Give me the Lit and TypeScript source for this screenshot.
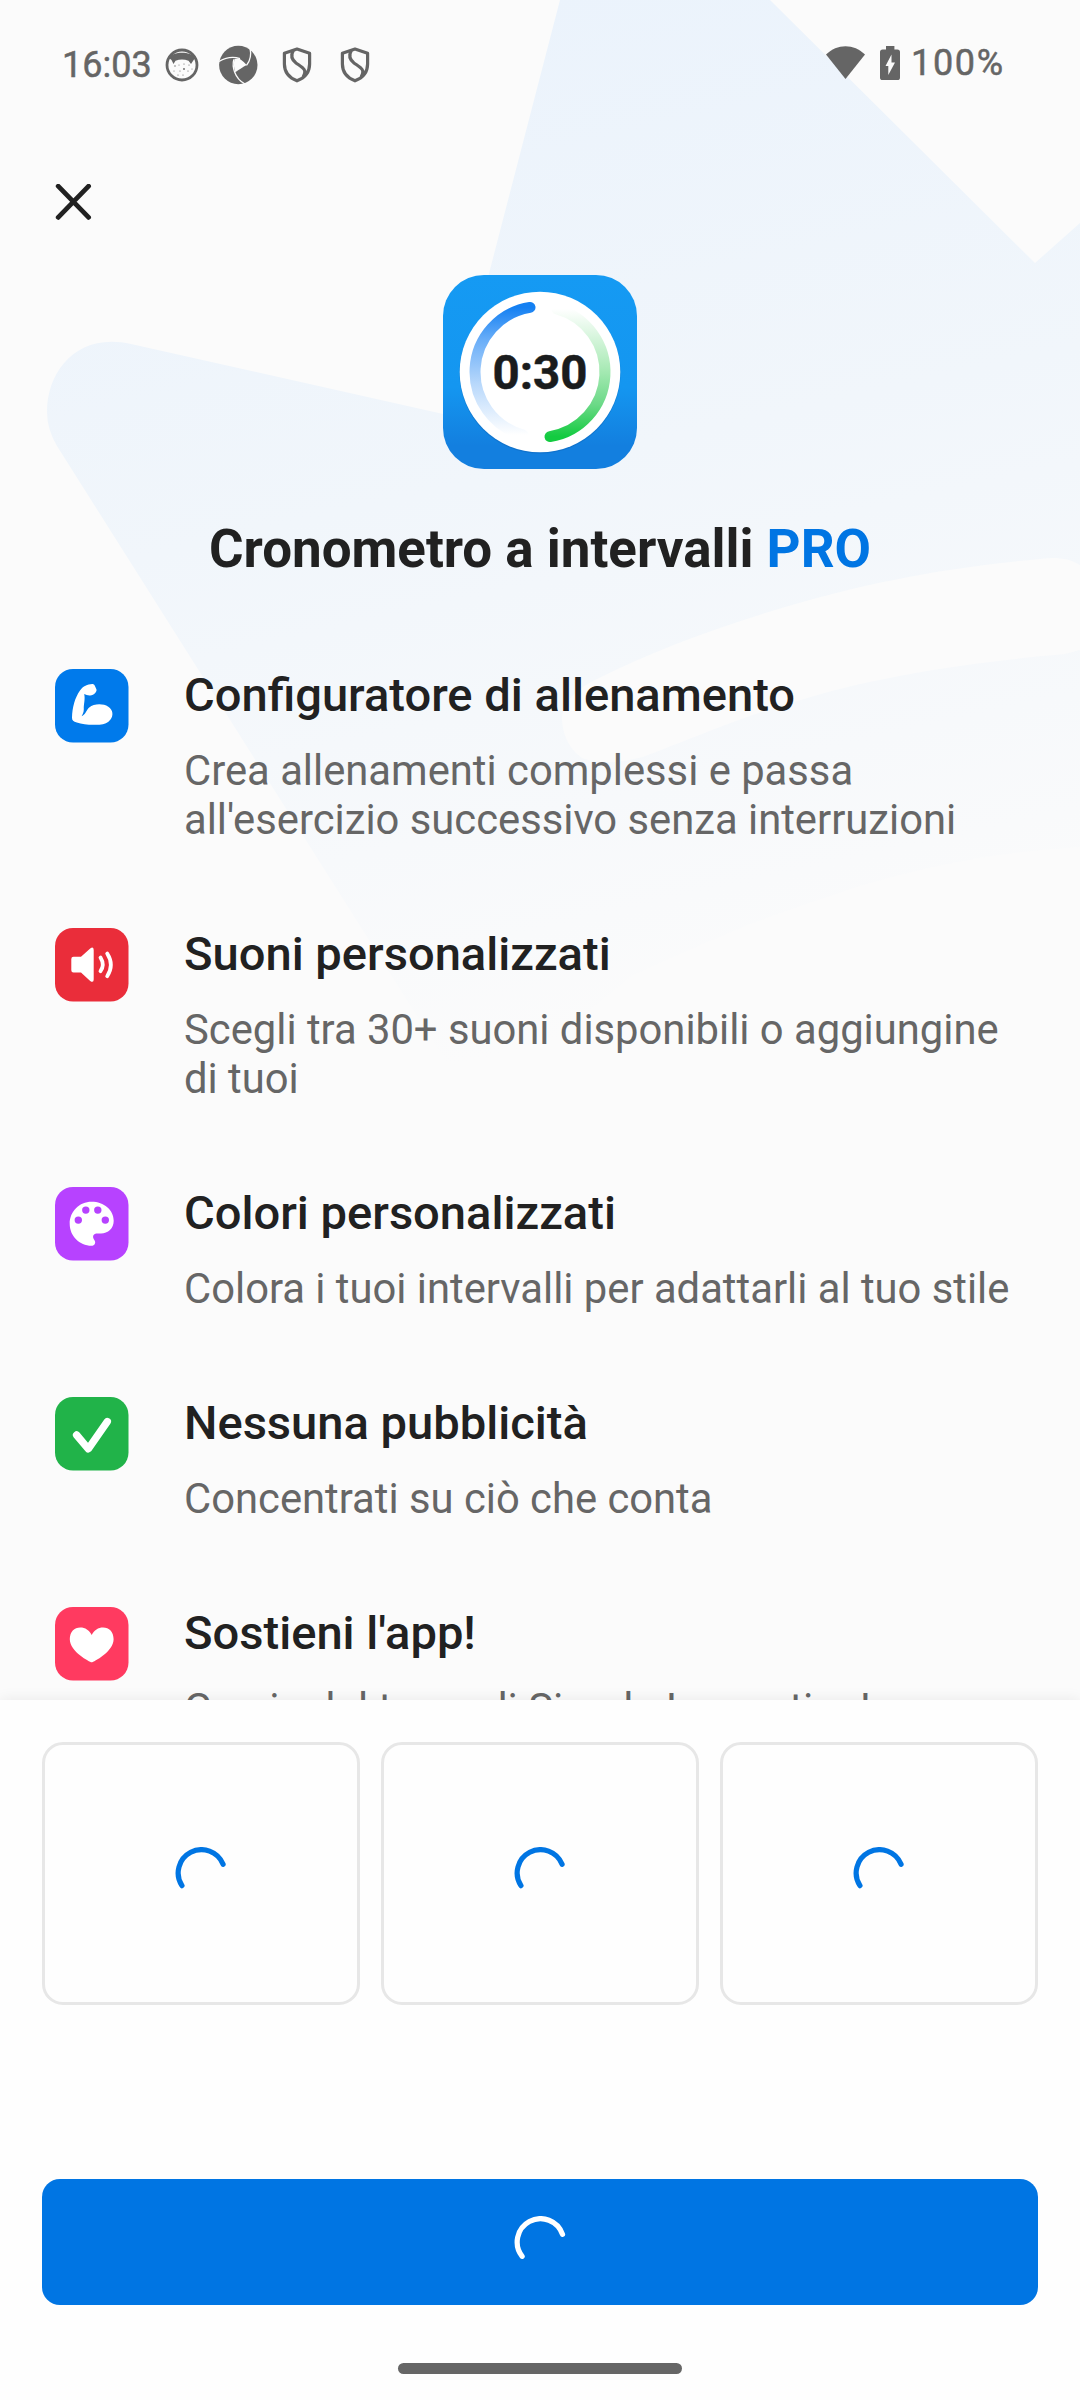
import { LitElement, html, css, svg } from "lit";
import { customElement, property } from "lit/decorators.js";

type Feature = { icon: string; title: string; text: string; color: string };

const FEATURES: Feature[] = [
  { icon: "arm", color: "#007aeb", title: "Configuratore di allenamento", text: "Crea allenamenti complessi e passa all'esercizio successivo senza interruzioni" },
  { icon: "sound", color: "#ea2d3a", title: "Suoni personalizzati", text: "Scegli tra 30+ suoni disponibili o aggiungine di tuoi" },
  { icon: "palette", color: "#b742ff", title: "Colori personalizzati", text: "Colora i tuoi intervalli per adattarli al tuo stile" },
  { icon: "check", color: "#21b349", title: "Nessuna pubblicità", text: "Concentrati su ciò che conta" },
  { icon: "heart", color: "#ff3a60", title: "Sostieni l'app!", text: "Grazie dal team di Simple Innovation!" },
];

// Glyphs are drawn on a 73x73 tile.
const GLYPHS: Record<string, unknown> = {
  arm: svg`<path fill="#fff" d="M37.2 15 C38.5 14.8 39.3 15.6 39.8 16.8 L41.3 20 C42 21.5 41.2 22.8 40.2 24 C38.8 25.6 36.8 26.6 34.5 26.4 C32.5 26.2 30.8 25.9 29.2 25 C30.4 30 28.6 35.5 28.8 40 C28.9 43 27.7 45.4 26.6 47.2 C30.8 45.8 31.2 41.2 34.2 38.6 C39 34.4 48 34.3 53.3 37.7 C58 40.7 58.7 46.3 55.5 50.5 C53 54 49.5 55.5 44.5 55.7 C37 56 28 56 21.8 53.6 C18.5 52.4 16.9 51.5 17 48.4 C17.3 38.3 19.8 28.9 25 21.5 C28.2 17 32.5 15.2 37.2 15Z"/>`,
  sound: svg`<path fill="#fff" d="M18.5 28.8 H26 L35.2 20.4 Q38.7 18 38.7 22 V51.4 Q38.7 55.3 35.2 53 L26 44.4 H18.5 Q16.3 44.4 16.3 42.2 V31 Q16.3 28.8 18.5 28.8Z"/><g fill="none" stroke="#fff" stroke-width="3.8" stroke-linecap="round"><path d="M45.5 29.6 Q50 37 45.5 43.2"/><path d="M52.2 25.6 Q59.5 37 52.2 48.2"/></g>`,
  palette: svg`<path fill="#fff" fill-rule="evenodd" d="M36.5 14.7 C49 14.7 58.7 22.8 58.7 33.7 C58.7 41.5 53 46.4 46 46.4 H42.4 C38.5 46.4 37 49 39 52.4 C41.6 55.6 39.6 58.7 36.5 58.7 C24.4 58.7 14.7 49 14.7 36.7 C14.7 24.4 24.4 14.7 36.5 14.7Z"/><g fill="#b742ff"><circle cx="23.3" cy="33.1" r="3.7"/><circle cx="30.8" cy="23.1" r="3.7"/><circle cx="42.8" cy="23.1" r="3.7"/><circle cx="50.3" cy="33.1" r="3.7"/></g>`,
  check: svg`<path d="M21.6 38 L33.3 51.8 L52.3 24.6" fill="none" stroke="#fff" stroke-width="7.4" stroke-linecap="round" stroke-linejoin="round"/>`,
  heart: svg`<path fill="#fff" d="M36.7 55.3 C34.8 55.3 14.8 44.5 14.8 32.3 C14.8 24.8 19.3 20.5 25.3 20.5 C30.2 20.5 34.2 23 36.7 28 C39.2 23 43.2 20.5 48.1 20.5 C54.1 20.5 58.6 24.8 58.6 32.3 C58.6 44.5 38.6 55.3 36.7 55.3Z"/>`,
};

@customElement("loading-arc")
class LoadingArc extends LitElement {
  // Arc ends in degrees, clockwise from three o'clock.
  @property({ type: Number }) from = 147;
  @property({ type: Number }) to = -22;
  static styles = css`
    :host { display: block; width: 53px; height: 53px; }
    svg { display: block; }
    path { fill: none; stroke: currentColor; stroke-width: 5.2; stroke-linecap: round; }
  `;
  private point(deg: number) {
    const a = (deg * Math.PI) / 180;
    return `${(23.3 * Math.cos(a)).toFixed(2)} ${(23.3 * Math.sin(a)).toFixed(2)}`;
  }
  render() {
    return html`<svg width="53" height="53" viewBox="-26.5 -26 53 53"><path d="M${this.point(this.from)} A23.3 23.3 0 1 1 ${this.point(this.to)}"/></svg>`;
  }
}

@customElement("status-bar")
class StatusBar extends LitElement {
  static styles = css`
    :host { display: flex; justify-content: space-between; height: 128px; box-sizing: border-box; padding: 0 76px 0 62px; color: #656565; font: 400 36px/126px Roboto, sans-serif; }
    .group { display: flex; align-items: center; }
    .left { padding-top: 2px; }
    .right { padding-bottom: 2px; }
    svg { display: block; }
    .time { width: 103px; letter-spacing: 0px; }
    .face { margin-right: 20px; }
    .shutter { margin-right: 24px; }
    .shield { margin-right: 28px; }
    .wifi { margin-right: 15px; }
    .battery { margin-right: 11px; }
    .level { width: 93px; letter-spacing: 1.7px; white-space: nowrap; }
    .text { -webkit-text-stroke: 0.5px #656565; }
  `;
  private shield() {
    return html`<svg class="shield" width="30" height="36" viewBox="0 0 30 36" fill="none" stroke="#656565" stroke-width="3.2" stroke-linejoin="round"><path d="M15 2 L27.6 6.2 V17 C27.6 25.4 22.3 31 15 33.8 C7.7 31 2.4 25.4 2.4 17 V6.2 Z"/><path d="M11.3 3.5 C8.5 8.5 9.5 12.5 14 16 C20.5 20.5 25.5 22.5 21.3 29.5"/></svg>`;
  }
  render() {
    return html`
      <div class="group left">
        <span class="time text">16:03</span>
        <svg class="face" width="34" height="34" viewBox="0 0 34 34"><circle cx="17" cy="17" r="15" fill="none" stroke="#656565" stroke-width="2.8"/><path fill="#656565" d="M4 10 C8 3 26 3 30 10 L28 13 L26 16 L23.5 12.8 C19 11 15 11 10.5 12.8 L8.5 16 L6.5 12Z"/><g fill="#656565"><circle cx="10" cy="18" r=".7"/><circle cx="14" cy="17" r=".5"/><circle cx="19" cy="16" r=".6"/><circle cx="24" cy="17" r=".6"/><circle cx="19" cy="21" r=".9"/><circle cx="15" cy="23" r=".6"/><circle cx="9" cy="23" r=".5"/><circle cx="23" cy="23" r=".6"/><circle cx="13" cy="27" r=".6"/><circle cx="18" cy="27" r=".6"/><circle cx="27" cy="21" r=".5"/></g></svg>
        <svg class="shutter" width="39" height="40" viewBox="0 0 39 40"><circle cx="19.3" cy="20" r="19.2" fill="#656565"/><g fill="none" stroke="#fbfbfb" stroke-width="1.3"><path d="M31 3 C32.6 10 31 16 27.5 20.4"/><path d="M0 16.5 C7 12.4 14.5 11.5 21 13.7"/><path d="M14.8 14.3 C13 21 15 33 26 39"/></g><path d="M15.5 14 C19 12.6 22 13.6 27.8 20 C24 22 20 24.6 16.3 27.3 C14.6 22 14.6 18 15.5 14Z" fill="#fbfbfb"/></svg>
        ${this.shield()}${this.shield()}
      </div>
      <div class="group right">
        <svg class="wifi" width="39" height="34" viewBox="0 0 39 34"><path fill="#656565" d="M0 8.6 C11 -2.6 28 -2.6 39 8.6 L19.5 33Z"/></svg>
        <svg class="battery" width="20" height="34" viewBox="0 0 20 34"><path fill="#656565" d="M6 0 H14.4 V3.4 H17.4 Q20 3.4 20 6 V31.4 Q20 34 17.4 34 H2.6 Q0 34 0 31.4 V6 Q0 3.4 2.6 3.4 H6Z"/><path fill="#fbfbfb" d="M11.5 8.5 V16.4 H15 L8.3 29 V20 H5.5Z"/></svg>
        <span class="level text">100%</span>
      </div>`;
  }
}

@customElement("app-root")
class AppRoot extends LitElement {
  static styles = css`
    :host { display: block; width: 1080px; height: 2400px; font-family: Roboto, sans-serif; color: #212121; }
    .page { position: relative; display: flex; flex-direction: column; height: 2400px; overflow: hidden; background: #fbfbfb; }
    .backdrop { position: absolute; left: 0; top: 0; }
    svg { display: block; }
    .scroll { position: relative; display: flex; flex-direction: column; height: 1700px; overflow: hidden; }
    .close { margin: 56px 0 0 55px; width: 37px; height: 36px; flex: none; }
    .logo { align-self: center; margin-top: 55px; flex: none; }
    h1 { margin: 46px 0 0; text-align: center; font-size: 52.9px; line-height: 68px; font-weight: 700; flex: none; }
    .pro { color: #0075e3; }
    .features { display: flex; flex-direction: column; gap: 84px; margin-top: 86px; padding: 0 55px; flex: none; }
    .feature { display: flex; gap: 55.5px; }
    .tile { flex: none; }
    .copy { width: 850px; }
    h2 { margin: -2px 0 23px; font-size: 47.1px; line-height: 56px; font-weight: 500; }
    p { margin: 0; font-size: 41.75px; line-height: 49px; color: #666; }
    .sheet { position: relative; display: flex; flex-direction: column; height: 700px; background: #fefefe; box-shadow: 0 0 14px rgba(0, 0, 0, 0.08); }
    .plans { display: grid; grid-template-columns: repeat(3, 1fr); gap: 21px; padding: 42px 42px 0; }
    .plan { display: grid; place-items: center; height: 263px; box-sizing: border-box; border: 3px solid #e7e7e7; border-radius: 21px; color: #0075e3; }
    .buy { display: grid; place-items: center; margin: 174px 42px 0; height: 126px; border-radius: 18px; background: #0075e3; color: #fff; }
    .handle { align-self: center; margin-top: 58px; width: 284px; height: 11px; border-radius: 6px; background: #666; }
  `;

  private backdrop() {
    return html`<svg class="backdrop" width="1080" height="1100" viewBox="0 0 1080 1100">
      <defs><linearGradient id="fade" gradientUnits="userSpaceOnUse" x1="520" y1="0" x2="745" y2="1000"><stop offset="0" stop-color="#ebf3fc"/><stop offset=".45" stop-color="#f1f6fb"/><stop offset="1" stop-color="#fbfbfb"/></linearGradient></defs>
      <path fill="url(#fade)" d="M560 0 L452 416 L131 344 C78 332 47 370 47 412 Q47 429 57 446 L470 1100 H1080 V223 L1035 263 L770 0Z"/>
      <path fill="#fbfbfb" d="M1080 565 C1068 558 1056 557 1040 559 C940 568 860 584 775 610 C710 630 650 652 595 680 C572 692 562 705 562 720 C563 738 571 750 582 758 C600 765 630 763 656 752 C700 735 745 716 794 702 C850 684 930 666 1065 654 L1080 650Z"/>
      <path fill="#fbfbfb" d="M1080 847 C1035 850 1000 854 958 862 C925 868 895 876 863 885 C825 897 785 911 748 925 C710 941 670 958 633 975 L480 1100 H1080Z"/>
    </svg>`;
  }

  private logo() {
    return html`<svg class="logo" width="194" height="194" viewBox="0 0 194 194">
      <defs>
        <linearGradient id="tile" x1="0" y1="0" x2="0" y2="1"><stop offset="0" stop-color="#159af3"/><stop offset=".58" stop-color="#1496f0"/><stop offset=".88" stop-color="#137fdf"/><stop offset="1" stop-color="#137fdf"/></linearGradient>
        <linearGradient id="blue" x1="0" y1="0" x2="0" y2="1"><stop offset="0" stop-color="#1480f2"/><stop offset=".25" stop-color="#68adf8"/><stop offset=".6" stop-color="#b8d8fb"/><stop offset="1" stop-color="#fff"/></linearGradient>
        <linearGradient id="green" x1="0" y1="0" x2="0" y2="1"><stop offset="0" stop-color="#fff"/><stop offset=".45" stop-color="#adebb9"/><stop offset=".75" stop-color="#6bd987"/><stop offset="1" stop-color="#13cb40"/></linearGradient>
      </defs>
      <rect width="194" height="194" rx="41" fill="url(#tile)"/>
      <circle cx="97" cy="98" r="80.6" fill="#0c5cab" opacity=".35"/>
      <circle cx="97" cy="97" r="80.3" fill="#fff"/>
      <g fill="none" stroke-width="11" stroke-linecap="round">
        <path stroke="url(#blue)" d="M87 32.4 A65.4 65.4 0 0 0 80 160"/>
        <path stroke="url(#green)" d="M114 34 A65.4 65.4 0 0 1 107 161.6"/>
      </g>
      <text x="97" y="113.7" text-anchor="middle" font-family="Roboto, sans-serif" font-weight="700" font-size="48.5" textLength="95" lengthAdjust="spacingAndGlyphs" fill="#1a1c1d" stroke="#1a1c1d" stroke-width=".5">0:30</text>
    </svg>`;
  }

  render() {
    return html`<div class="page">
      ${this.backdrop()}
      <div class="scroll">
        <status-bar></status-bar>
        <svg class="close" width="37" height="36" viewBox="0 0 37 36"><path d="M3.2 2.2 L33.6 33.4 M33.6 2.2 L3.2 33.4" stroke="#212121" stroke-width="4.8" stroke-linecap="round"/></svg>
        ${this.logo()}
        <h1>Cronometro a intervalli <span class="pro">PRO</span></h1>
        <div class="features">
          ${FEATURES.map((f) => html`<div class="feature">
            <svg class="tile" width="73.5" height="73.5" viewBox="0 0 73.5 73.5"><rect width="73.5" height="73.5" rx="18" fill=${f.color}/>${GLYPHS[f.icon]}</svg>
            <div class="copy"><h2>${f.title}</h2><p>${f.text}</p></div>
          </div>`)}
        </div>
      </div>
      <div class="sheet">
        <div class="plans">${[0, 1, 2].map(() => html`<div class="plan"><loading-arc></loading-arc></div>`)}</div>
        <div class="buy"><loading-arc .from=${142} .to=${-19}></loading-arc></div>
        <div class="handle"></div>
      </div>
    </div>`;
  }
}
